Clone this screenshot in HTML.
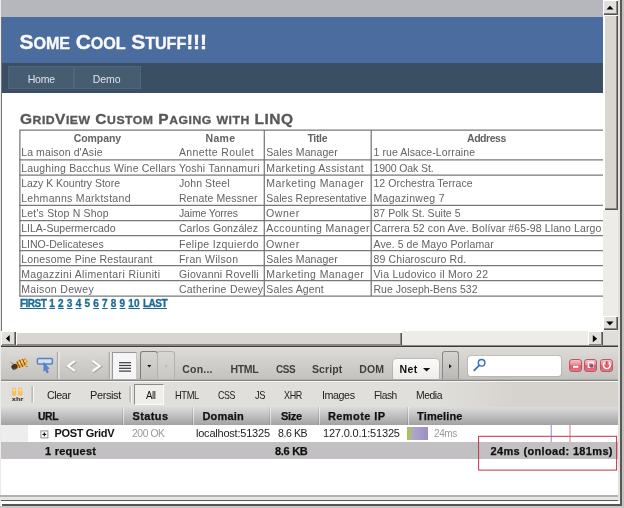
<!DOCTYPE html>
<html lang="en">
<head>
<meta charset="utf-8">
<title>GridView Custom Paging with LINQ</title>
<style>
html,body{margin:0;padding:0}
body{width:624px;height:508px;overflow:hidden;position:relative;background:#fff;font-family:"Liberation Sans",sans-serif;font-size:10.5px;color:#696969}
.t{position:absolute;white-space:nowrap;transform-origin:0 50%;height:20px;line-height:20px;margin:0;padding:0}.sc{font-size:79%;text-transform:uppercase}.sc1{font-size:77%;text-transform:uppercase}#t-hdr .t{-webkit-text-stroke:.35px #f9f9f9}#t-main .t{-webkit-text-stroke:.3px currentColor}#t-fbhead .t,#t-fbsum .t{-webkit-text-stroke:.25px currentColor}.t a{text-decoration:underline;color:inherit}.t a.w{letter-spacing:-.5px}
.abs{position:absolute}
.soft{filter:blur(.4px)}
#winL{left:0;top:0;width:1px;height:508px;background:#ebebe8}
#viewport{left:1px;top:0;width:602px;height:331px;background:#b6b7bc;overflow:hidden}
#page{left:0;top:17px;width:980px;height:400px;background:#fff;border-left:1px solid #6b747e}
#header{left:0;top:0;width:980px;height:46px;background:#4b6c9e}
#menu{left:0;top:46px;width:980px;height:30px;background:#3a4f63}
#menu .tab{top:3px;height:21px;background:#465c71;border:1px solid #4e667d}
#main{left:0;top:76px;width:980px;height:330px;background:#fff}
/* classic scrollbars */
.sb{background:#edece9}
.btn3d{background:#e2e0dc;box-shadow:inset 1px 1px 0 #fff,inset -1px -1px 0 #55524e,inset -2px -2px 0 #8d8a86}
.thv{background:#d9d6d1;box-shadow:inset 2px 1px 0 #fff,inset -1px -1px 0 #55524e,inset -2px -2px 0 #8d8a86}
.thh{background:#d9d6d1;box-shadow:inset 1px 2px 0 #fff,inset -1px -1px 0 #55524e,inset -2px -2px 0 #8d8a86}
#fb{left:1px;top:345px;width:617px;height:150px;background:#fff}
#fbtop{left:0;top:2px;width:617px;height:33px;background:linear-gradient(#dedcd8,#cfcdca 55%,#c4c2bf)}
#fbbar{left:0;top:37px;width:617px;height:26px;background:linear-gradient(90deg,#e1dfdb 0,#e1dfdb 70%,#d6d3ce 84%)}
#fbhead{left:0;top:62px;width:617px;height:18px;background:linear-gradient(#dcdcdc,#c2c2c2 45%,#a2a2a2)}
#fbrow{left:0;top:80px;width:617px;height:17px;background:#fff}
#fbsum{left:0;top:97px;width:617px;height:17px;background:#c2c0c2}
.colsep{top:0;width:1px;height:18px;background:linear-gradient(#c8c8c8,#8e8e8e);box-shadow:1px 0 0 rgba(255,255,255,.55)}
.fbbtn{border:1px solid #8a8886;border-bottom:0;border-radius:3px 3px 0 0;box-sizing:border-box}
.red{top:14px;width:13px;height:13px;border-radius:3px;box-sizing:border-box;border:1px solid #c25560;background:linear-gradient(#f6c0c5,#e98791 45%,#d95a68 52%,#e27884)}
</style>
</head>
<body>
<div id="winL" class="abs"></div>

<!-- browser viewport -->
<div id="viewport" class="abs">
  <div id="page" class="abs">
    <div id="header" class="abs"></div>
    <div id="menu" class="abs">
      <div class="tab abs" style="left:6px;width:64px"></div>
      <div class="tab abs" style="left:72px;width:65px"></div>
    </div>
    <div id="main" class="abs"></div>
  </div>
</div>

<!-- vertical scrollbar -->
<div class="abs sb" style="left:603px;top:0;width:15px;height:331px"></div>
<div class="abs btn3d" style="left:603px;top:0;width:15px;height:15px"></div>
<div class="abs btn3d thv" style="left:603px;top:15px;width:15px;height:195px"></div>
<div class="abs btn3d" style="left:603px;top:316px;width:15px;height:14px"></div>
<!-- horizontal scrollbar -->
<div class="abs sb" style="left:1px;top:331px;width:602px;height:15px"></div>
<div class="abs btn3d" style="left:1px;top:331px;width:15px;height:15px"></div>
<div class="abs btn3d thh" style="left:16px;top:331px;width:386px;height:15px"></div>
<div class="abs btn3d" style="left:588px;top:331px;width:15px;height:15px"></div>
<div class="abs" style="left:603px;top:331px;width:15px;height:15px;background:#e0deda"></div>
<!-- window right frame -->
<div class="abs" style="left:618px;top:0;width:2px;height:508px;background:#e3e2df"></div>
<div class="abs" style="left:620px;top:0;width:2px;height:506px;background:#5a5957"></div>
<div class="abs" style="left:622px;top:0;width:2px;height:508px;background:#c4c2be"></div>

<!-- firebug -->
<div id="fb" class="abs">
  <div class="abs" style="left:0;top:0;width:617px;height:1px;background:#8a8886"></div>
  <div class="abs" style="left:0;top:1px;width:617px;height:1px;background:#3e3d3c"></div>
  <div id="fbtop" class="abs">
    <div class="abs" style="left:111px;top:5px;width:25px;height:28px;background:#f5f5f8;border:1px solid #9a9896;border-right-color:#c8c6c4;border-bottom:0;box-sizing:border-box"></div>
    <div class="abs fbbtn" style="left:139px;top:4px;width:18px;height:29px;border-color:#7e7c78;background:linear-gradient(#d8d6d2,#c3c1bd)"></div>
    <div class="abs fbbtn" style="left:156px;top:4px;width:18px;height:29px;border-color:#b4b2ae;background:linear-gradient(#dad8d4,#c8c6c2)"></div>
    <div class="abs" style="left:392px;top:12px;width:46px;height:21px;border-radius:4px 4px 0 0;background:linear-gradient(#fbfbfa,#ecebe9);box-shadow:0 0 0 1px rgba(160,158,154,.45)"></div>
    <div class="abs fbbtn" style="left:441px;top:4px;width:17px;height:29px;background:linear-gradient(#d6d4d0,#b9b7b3)"></div>
    <div class="abs" style="left:467px;top:9px;width:93px;height:20px;border-radius:3px;background:#fff;box-shadow:0 0 0 1px rgba(170,168,164,.5)"></div>
    <div class="abs red" style="left:568px;top:12px"></div>
    <div class="abs red" style="left:583px;top:12px"></div>
    <div class="abs red" style="left:599px;top:12px"></div>
  </div>
  <div class="abs" style="left:0;top:34px;width:617px;height:1px;background:#b0aeaa"></div>
  <div class="abs" style="left:0;top:35px;width:617px;height:1px;background:#8a8886"></div>
  <div class="abs" style="left:0;top:36px;width:617px;height:1px;background:#f4f4f2"></div>
  <div id="fbbar" class="abs">
    <div class="abs" style="left:133px;top:2px;width:30px;height:21px;background:#efeeeb;border:1px solid #8c8a86;border-right-color:#fbfbfa;border-bottom-color:#fbfbfa;box-sizing:border-box"></div>
  </div>
  <div id="fbhead" class="abs">
    <div class="abs colsep" style="left:121px"></div>
    <div class="abs colsep" style="left:191px"></div>
    <div class="abs colsep" style="left:268px"></div>
    <div class="abs colsep" style="left:317px"></div>
    <div class="abs colsep" style="left:406px"></div>
  </div>
  <div id="fbrow" class="abs"><div class="abs" style="left:0;top:0;width:27px;height:17px;background:#ededed"></div>
    <div class="abs" style="left:406px;top:2px;width:4px;height:13px;background:#a9c35e"></div>
    <div class="abs" style="left:410px;top:2px;width:17px;height:13px;background:linear-gradient(90deg,#b3a7cf,#9c90c1)"></div>
  </div>
  <div id="fbsum" class="abs"></div>
</div>
<!-- bottom frame -->
<div class="abs" style="left:0;top:495px;width:618px;height:2px;background:#b2b2b0"></div>
<div class="abs" style="left:0;top:497px;width:618px;height:3px;background:#e8e8e2"></div>
<div class="abs" style="left:1px;top:500px;width:617px;height:1px;background:#5a5a58"></div>
<div class="abs" style="left:1px;top:501px;width:619px;height:3px;background:#fdfdfd"></div>
<div class="abs" style="left:2px;top:504px;width:620px;height:2px;background:#565654"></div>
<div class="abs" style="left:0;top:506px;width:624px;height:2px;background:#c8c8c6"></div>

<!-- line / icon overlay -->
<svg class="abs" style="left:0;top:0" width="624" height="508" viewBox="0 0 624 508">
<g stroke="#787878" stroke-width="1.25" fill="none">
<path d="M19.3 130H603 M19.9 129.4V296.6"/>
<path d="M19.3 159.8H603"/>
<path d="M19.3 175.2H603"/>
<path d="M19.3 205.4H603"/>
<path d="M19.3 220.5H603"/>
<path d="M19.3 235.6H603"/>
<path d="M19.3 250.6H603"/>
<path d="M19.3 265.6H603"/>
<path d="M19.3 280.7H603"/>
<path d="M19.3 296.0H603"/>
<path d="M264.3 130V296 M371.2 130V296"/>
</g>
<g fill="#000">
<path d="M606.5 9.5h7l-3.5-3.7z"/>
<path d="M606.3 321.6h7.2l-3.6 3.9z"/>
<path d="M9.7 334.9v7l-3.8-3.5z"/>
<path d="M592.8 335v7.3l4.3-3.65z"/>
</g>
<path d="M57.5 352V379" stroke="#a9a7a3" stroke-width="1.2"/><path d="M58.9 352V379" stroke="#f0efed" stroke-width="1.2"/>
<path d="M109.3 352V379" stroke="#a9a7a3" stroke-width="1.2"/><path d="M110.7 352V379" stroke="#f0efed" stroke-width="1.2"/>
<path d="M75 360.8L68 366l7 5.2" fill="none" stroke="#a19f9b" stroke-width="3.3" stroke-linejoin="miter" transform="translate(0.4,0.6)"/>
<path d="M75 360.8L68 366l7 5.2" fill="none" stroke="#fbfbfa" stroke-width="2.3" stroke-linejoin="miter"/>
<path d="M92.5 360.8L99.8 366l-7.3 5.2" fill="none" stroke="#a19f9b" stroke-width="3.3" stroke-linejoin="miter" transform="translate(0.4,0.6)"/>
<path d="M92.5 360.8L99.8 366l-7.3 5.2" fill="none" stroke="#fbfbfa" stroke-width="2.3" stroke-linejoin="miter"/>
<path d="M119 362.7H131" stroke="#3c3c3c" stroke-width="1.2"/>
<path d="M119 365.5H131" stroke="#3c3c3c" stroke-width="1.2"/>
<path d="M119 368.3H131" stroke="#3c3c3c" stroke-width="1.2"/>
<path d="M119 371.1H131" stroke="#3c3c3c" stroke-width="1.2"/>
<path d="M147.2 365h4.2l-2.1 2.5z" fill="#111"/>
<path d="M165.5 364.5l2.4 1.7-2.4 1.7z" fill="#c9aeb0"/>
<path d="M423 368h7.2l-3.6 3.4z" fill="#111"/>
<path d="M449 364l2.8 2.2-2.8 2.2z" fill="#222"/>
<circle cx="481.6" cy="362.8" r="3.3" fill="#f2f6fc" stroke="#3a6fb2" stroke-width="1.4"/><path d="M479.2 365.4l-5 4.9" stroke="#3a6fb2" stroke-width="1.7" stroke-linecap="round"/>
<path d="M573 366.8h5.4" stroke="#fff" stroke-width="2"/>
<rect x="588.3" y="362.3" width="5" height="5" fill="none" stroke="#fff" stroke-width="1.2"/><rect x="590.2" y="364.4" width="3.2" height="3.2" fill="#8a4a6a"/>
<path d="M604.6 362.6a3.4 3.4 0 1 0 4.4 0" fill="none" stroke="#fff" stroke-width="1.4"/><path d="M606.8 361.2v3.6" stroke="#8a4a5a" stroke-width="1.3"/>
<g transform="translate(1.3,-0.4) rotate(-26 18.5 364.5)"><ellipse cx="20.5" cy="364.5" rx="6.6" ry="3.9" fill="#f2a73a"/><ellipse cx="21.5" cy="363.6" rx="4.2" ry="1.8" fill="#fbd36a"/><ellipse cx="12.6" cy="364.5" rx="3.2" ry="2.8" fill="#4a3620"/><path d="M17 361v7M20 360.7v7.6M23 361.2v6.6" stroke="#7a4a18" stroke-width="1"/></g>
<path d="M10.5 362.5l3 1.2M13 370.6l1.8-2.2M25 358.6l-1.3 2.2M28 366.6l-2.5-.3" stroke="#8a8270" stroke-width=".8"/>
<rect x="37.4" y="358.4" width="15" height="5.6" rx="1" fill="#d3def0" stroke="#5a80c0" stroke-width="1.5"/>
<path d="M43.8 362.4l5.4 6.2-2.2.3 1.4 3.4-1.6.7-1.4-3.3-1.6 1.5z" fill="#5585d8" stroke="#3f6ec0" stroke-width=".5"/>
<rect x="12" y="387.6" width="4.2" height="8.4" rx="1.8" fill="#f7c060"/><rect x="18.2" y="387.6" width="4.2" height="8.4" rx="1.8" fill="#f7c060"/><circle cx="14.1" cy="390" r="1.2" fill="#fbe2a0"/><circle cx="20.3" cy="390" r="1.2" fill="#fbe2a0"/>
<text x="11.8" y="401.3" font-family="Liberation Sans, sans-serif" font-size="6.2" font-weight="bold" fill="#222" textLength="11.5" lengthAdjust="spacingAndGlyphs">xhr</text>
<path d="M32.2 386V402.6" stroke="#a3a19d" stroke-width="1.1"/><path d="M33.4 386V402.6" stroke="#f8f8f6" stroke-width="1.1"/>
<path d="M130.2 386V402.6" stroke="#a3a19d" stroke-width="1.1"/><path d="M131.4 386V402.6" stroke="#f8f8f6" stroke-width="1.1"/>
<rect x="40.9" y="430.9" width="7" height="7" fill="#fff" stroke="#8c8c8c" stroke-width="1"/><path d="M42.6 434.4h3.6M44.4 432.6v3.6" stroke="#111" stroke-width="1.1"/>
<path d="M551.2 425V442" stroke="#8a8fd0" stroke-width="1"/><path d="M570 425V442" stroke="#d87a8a" stroke-width="1"/>
<rect x="478.6" y="436.3" width="138" height="33.8" fill="none" stroke="#c2344a" stroke-width="1"/>
</svg>

<!-- text -->
<div id="t-hdr" class="soft"><span class="t" style="left:19.50px;top:31.72px;font-size:21px;color:#f9f9f9;font-weight:bold;letter-spacing:-0.085px;">S<span class="sc1">ome</span> C<span class="sc1">ool</span> S<span class="sc1">tuff</span>!!!</span></div>
<div id="t-nav" class="soft"><span class="t" style="left:27.70px;top:68.76px;font-size:10.5px;color:#dde4ec;letter-spacing:-0.239px;">Home</span>
<span class="t" style="left:92.80px;top:68.76px;font-size:10.5px;color:#dde4ec;letter-spacing:-0.105px;">Demo</span></div>
<div id="t-main" class="soft"><span class="t" style="left:19.80px;top:109.15px;font-size:14px;color:#585858;font-weight:bold;letter-spacing:0.450px;transform:scaleX(1.107);">G<span class="sc">rid</span>V<span class="sc">iew</span> C<span class="sc">ustom</span> P<span class="sc">aging</span> <span class="sc">with</span> LINQ</span>
<span class="t" style="left:19.90px;top:293.54px;font-size:10px;color:#1b6a94;font-weight:bold;letter-spacing:0.216px;"><a class="w">FIRST</a> <a>1</a> <a>2</a> <a>3</a> <a>4</a> 5 <a>6</a> <a>7</a> <a>8</a> <a>9</a> <a>10</a> <a class="w">LAST</a></span></div>
<div id="t-grid" class="soft"><span class="t" style="left:73.70px;top:128.36px;font-size:10.5px;color:#636363;font-weight:bold;letter-spacing:-0.057px;">Company</span>
<span class="t" style="left:205.50px;top:128.36px;font-size:10.5px;color:#636363;font-weight:bold;letter-spacing:0.297px;">Name</span>
<span class="t" style="left:307.50px;top:128.36px;font-size:10.5px;color:#636363;font-weight:bold;letter-spacing:-0.352px;">Title</span>
<span class="t" style="left:467.00px;top:128.36px;font-size:10.5px;color:#636363;font-weight:bold;letter-spacing:-0.450px;">Address</span>
<span class="t" style="left:21.20px;top:142.36px;font-size:10.5px;color:#636363;letter-spacing:0.111px;">La maison d'Asie</span>
<span class="t" style="left:178.90px;top:142.36px;font-size:10.5px;color:#636363;letter-spacing:0.410px;">Annette Roulet</span>
<span class="t" style="left:266.30px;top:142.36px;font-size:10.5px;color:#636363;letter-spacing:0.065px;">Sales Manager</span>
<span class="t" style="left:373.50px;top:142.36px;font-size:10.5px;color:#636363;letter-spacing:0.084px;">1 rue Alsace-Lorraine</span>
<span class="t" style="left:21.20px;top:157.80px;font-size:10.5px;color:#636363;letter-spacing:0.202px;">Laughing Bacchus Wine Cellars</span>
<span class="t" style="left:178.90px;top:157.80px;font-size:10.5px;color:#636363;letter-spacing:0.253px;">Yoshi Tannamuri</span>
<span class="t" style="left:266.30px;top:157.80px;font-size:10.5px;color:#636363;letter-spacing:0.353px;">Marketing Assistant</span>
<span class="t" style="left:373.50px;top:157.80px;font-size:10.5px;color:#636363;letter-spacing:-0.100px;">1900 Oak St.</span>
<span class="t" style="left:21.20px;top:172.94px;font-size:10.5px;color:#636363;letter-spacing:-0.022px;">Lazy K Kountry Store</span>
<span class="t" style="left:178.90px;top:172.94px;font-size:10.5px;color:#636363;letter-spacing:0.108px;">John Steel</span>
<span class="t" style="left:266.30px;top:172.94px;font-size:10.5px;color:#636363;letter-spacing:0.433px;">Marketing Manager</span>
<span class="t" style="left:373.50px;top:172.94px;font-size:10.5px;color:#636363;letter-spacing:0.030px;">12 Orchestra Terrace</span>
<span class="t" style="left:21.20px;top:188.08px;font-size:10.5px;color:#636363;letter-spacing:0.301px;">Lehmanns Marktstand</span>
<span class="t" style="left:178.90px;top:188.08px;font-size:10.5px;color:#636363;letter-spacing:0.119px;">Renate Messner</span>
<span class="t" style="left:266.30px;top:188.08px;font-size:10.5px;color:#636363;letter-spacing:0.020px;">Sales Representative</span>
<span class="t" style="left:373.50px;top:188.08px;font-size:10.5px;color:#636363;letter-spacing:0.298px;">Magazinweg 7</span>
<span class="t" style="left:21.20px;top:203.22px;font-size:10.5px;color:#636363;letter-spacing:0.199px;">Let's Stop N Shop</span>
<span class="t" style="left:178.90px;top:203.22px;font-size:10.5px;color:#636363;letter-spacing:-0.146px;">Jaime Yorres</span>
<span class="t" style="left:266.30px;top:203.22px;font-size:10.5px;color:#636363;letter-spacing:0.450px;transform:scaleX(1.014);">Owner</span>
<span class="t" style="left:373.50px;top:203.22px;font-size:10.5px;color:#636363;letter-spacing:0.034px;">87 Polk St. Suite 5</span>
<span class="t" style="left:21.20px;top:218.36px;font-size:10.5px;color:#636363;letter-spacing:0.021px;">LILA-Supermercado</span>
<span class="t" style="left:178.90px;top:218.36px;font-size:10.5px;color:#636363;letter-spacing:0.105px;">Carlos González</span>
<span class="t" style="left:266.30px;top:218.36px;font-size:10.5px;color:#636363;letter-spacing:0.405px;">Accounting Manager</span>
<span class="t" style="left:373.50px;top:218.36px;font-size:10.5px;color:#636363;letter-spacing:0.113px;">Carrera 52 con Ave. Bolívar #65-98 Llano Largo</span>
<span class="t" style="left:21.20px;top:233.50px;font-size:10.5px;color:#636363;letter-spacing:0.015px;">LINO-Delicateses</span>
<span class="t" style="left:178.90px;top:233.50px;font-size:10.5px;color:#636363;letter-spacing:0.339px;">Felipe Izquierdo</span>
<span class="t" style="left:266.30px;top:233.50px;font-size:10.5px;color:#636363;letter-spacing:0.450px;transform:scaleX(1.014);">Owner</span>
<span class="t" style="left:373.50px;top:233.50px;font-size:10.5px;color:#636363;letter-spacing:0.087px;">Ave. 5 de Mayo Porlamar</span>
<span class="t" style="left:21.20px;top:248.64px;font-size:10.5px;color:#636363;letter-spacing:0.176px;">Lonesome Pine Restaurant</span>
<span class="t" style="left:178.90px;top:248.64px;font-size:10.5px;color:#636363;letter-spacing:0.308px;">Fran Wilson</span>
<span class="t" style="left:266.30px;top:248.64px;font-size:10.5px;color:#636363;letter-spacing:0.065px;">Sales Manager</span>
<span class="t" style="left:373.50px;top:248.64px;font-size:10.5px;color:#636363;letter-spacing:0.131px;">89 Chiaroscuro Rd.</span>
<span class="t" style="left:21.20px;top:263.78px;font-size:10.5px;color:#636363;letter-spacing:0.386px;">Magazzini Alimentari Riuniti</span>
<span class="t" style="left:178.90px;top:263.78px;font-size:10.5px;color:#636363;letter-spacing:0.262px;">Giovanni Rovelli</span>
<span class="t" style="left:266.30px;top:263.78px;font-size:10.5px;color:#636363;letter-spacing:0.433px;">Marketing Manager</span>
<span class="t" style="left:373.50px;top:263.78px;font-size:10.5px;color:#636363;letter-spacing:0.252px;">Via Ludovico il Moro 22</span>
<span class="t" style="left:21.20px;top:278.92px;font-size:10.5px;color:#636363;letter-spacing:0.330px;">Maison Dewey</span>
<span class="t" style="left:178.90px;top:278.92px;font-size:10.5px;color:#636363;letter-spacing:0.254px;">Catherine Dewey</span>
<span class="t" style="left:266.30px;top:278.92px;font-size:10.5px;color:#636363;letter-spacing:0.135px;">Sales Agent</span>
<span class="t" style="left:373.50px;top:278.92px;font-size:10.5px;color:#636363;letter-spacing:0.005px;">Rue Joseph-Bens 532</span></div>
<div id="t-fbtabs" class="soft"><span class="t" style="left:182.30px;top:359.36px;font-size:10.5px;color:#404040;font-weight:bold;letter-spacing:0.206px;">Con...</span>
<span class="t" style="left:230.40px;top:359.36px;font-size:10.5px;color:#404040;font-weight:bold;letter-spacing:-0.291px;">HTML</span>
<span class="t" style="left:276.00px;top:359.36px;font-size:10.5px;color:#404040;font-weight:bold;letter-spacing:-0.450px;transform:scaleX(0.947);">CSS</span>
<span class="t" style="left:312.00px;top:359.36px;font-size:10.5px;color:#404040;font-weight:bold;letter-spacing:0.107px;">Script</span>
<span class="t" style="left:359.20px;top:359.36px;font-size:10.5px;color:#404040;font-weight:bold;letter-spacing:0.150px;">DOM</span>
<span class="t" style="left:399.60px;top:359.36px;font-size:10.5px;color:#111;font-weight:bold;letter-spacing:0.389px;">Net</span></div>
<div id="t-fbbar" class="soft"><span class="t" style="left:46.50px;top:384.99px;font-size:11px;color:#222;letter-spacing:-0.450px;transform:scaleX(0.980);">Clear</span>
<span class="t" style="left:90.00px;top:384.99px;font-size:11px;color:#222;letter-spacing:-0.388px;">Persist</span>
<span class="t" style="left:145.70px;top:384.99px;font-size:11px;color:#111;letter-spacing:-0.450px;transform:scaleX(0.882);">All</span>
<span class="t" style="left:174.50px;top:384.99px;font-size:11px;color:#222;letter-spacing:-0.450px;transform:scaleX(0.846);">HTML</span>
<span class="t" style="left:218.00px;top:384.99px;font-size:11px;color:#222;letter-spacing:-0.450px;transform:scaleX(0.806);">CSS</span>
<span class="t" style="left:254.50px;top:384.99px;font-size:11px;color:#222;letter-spacing:-0.450px;transform:scaleX(0.847);">JS</span>
<span class="t" style="left:283.70px;top:384.99px;font-size:11px;color:#222;letter-spacing:-0.450px;transform:scaleX(0.819);">XHR</span>
<span class="t" style="left:322.00px;top:384.99px;font-size:11px;color:#222;letter-spacing:-0.450px;transform:scaleX(0.976);">Images</span>
<span class="t" style="left:373.70px;top:384.99px;font-size:11px;color:#222;letter-spacing:-0.450px;transform:scaleX(0.928);">Flash</span>
<span class="t" style="left:416.00px;top:384.99px;font-size:11px;color:#222;letter-spacing:-0.450px;transform:scaleX(0.941);">Media</span></div>
<div id="t-fbhead" class="soft"><span class="t" style="left:37.50px;top:406.19px;font-size:11px;color:#111;font-weight:bold;letter-spacing:-0.450px;transform:scaleX(0.944);">URL</span>
<span class="t" style="left:132.50px;top:406.19px;font-size:11px;color:#111;font-weight:bold;letter-spacing:0.375px;">Status</span>
<span class="t" style="left:202.50px;top:406.19px;font-size:11px;color:#111;font-weight:bold;letter-spacing:0.171px;">Domain</span>
<span class="t" style="left:281.00px;top:406.19px;font-size:11px;color:#111;font-weight:bold;letter-spacing:-0.339px;">Size</span>
<span class="t" style="left:328.00px;top:406.19px;font-size:11px;color:#111;font-weight:bold;letter-spacing:0.400px;">Remote IP</span>
<span class="t" style="left:417.00px;top:406.19px;font-size:11px;color:#111;font-weight:bold;letter-spacing:0.152px;">Timeline</span></div>
<div id="t-fbrow" class="soft"><span class="t" style="left:54.50px;top:423.29px;font-size:11px;color:#111;font-weight:bold;letter-spacing:-0.330px;">POST GridV</span>
<span class="t" style="left:132.00px;top:423.29px;font-size:11px;color:#9a9a9a;letter-spacing:-0.450px;transform:scaleX(0.941);">200 OK</span>
<span class="t" style="left:196.00px;top:423.29px;font-size:11px;color:#222;letter-spacing:-0.219px;">localhost:51325</span>
<span class="t" style="left:278.00px;top:423.29px;font-size:11px;color:#222;letter-spacing:-0.450px;transform:scaleX(0.962);">8.6 KB</span>
<span class="t" style="left:323.00px;top:423.29px;font-size:11px;color:#222;letter-spacing:-0.181px;">127.0.0.1:51325</span>
<span class="t" style="left:433.70px;top:423.29px;font-size:11px;color:#9a9a9a;letter-spacing:-0.450px;transform:scaleX(0.912);">24ms</span></div>
<div id="t-fbsum" class="soft"><span class="t" style="left:45.00px;top:440.89px;font-size:11px;color:#111;font-weight:bold;letter-spacing:0.260px;">1 request</span>
<span class="t" style="left:275.00px;top:440.89px;font-size:11px;color:#111;font-weight:bold;letter-spacing:-0.290px;">8.6 KB</span>
<span class="t" style="left:490.50px;top:440.89px;font-size:11px;color:#111;font-weight:bold;letter-spacing:0.340px;">24ms (onload: 181ms)</span></div>
</body>
</html>
